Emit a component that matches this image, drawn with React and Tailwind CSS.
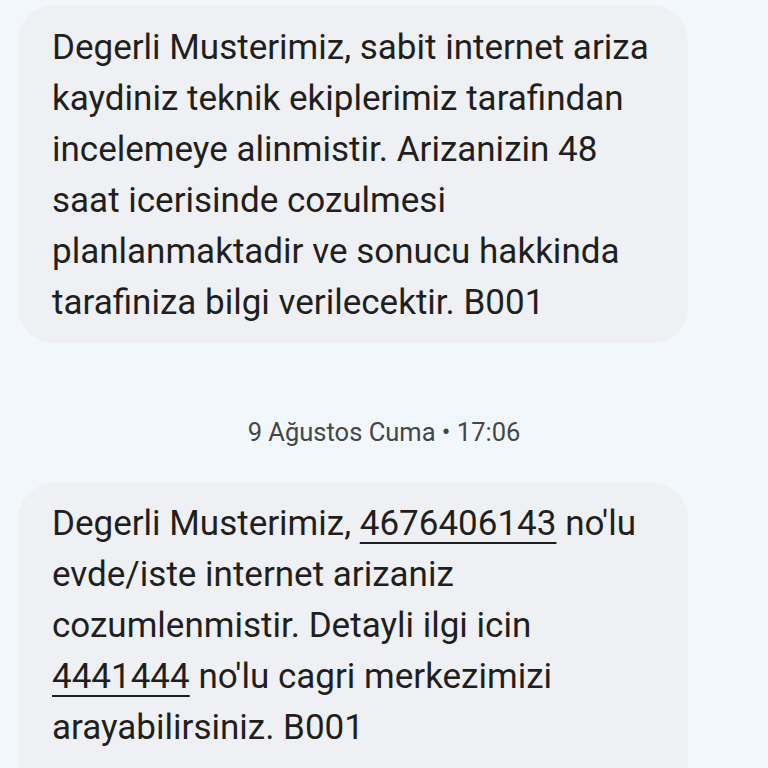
export default function App() {
  const font = { fontFamily: "Roboto, 'Noto Sans', sans-serif" };
  return (
    <div className="w-[768px] h-[768px] overflow-hidden bg-[#f2f7fc]" style={font}>
      <div className="pt-[5px] pl-[18px]">
        <div className="w-[670px] h-[338px] rounded-[36px] bg-[#eff0f3] pl-[34px] pt-[17px] text-[35px] leading-[51px] text-[#1f1f1f] whitespace-nowrap">
          <div>Degerli Musterimiz, sabit internet ariza</div>
          <div>kaydiniz teknik ekiplerimiz tarafindan</div>
          <div>incelemeye alinmistir. Arizanizin 48</div>
          <div>saat icerisinde cozulmesi</div>
          <div>planlanmaktadir ve sonucu hakkinda</div>
          <div>tarafiniza bilgi verilecektir. B001</div>
        </div>
      </div>
      <div className="h-[140px] flex items-center justify-center">
        <span className="text-[25.5px] text-[#444746] mt-[38px]">9 Ağustos Cuma • 17:06</span>
      </div>
      <div className="pl-[18px]">
        <div className="w-[670px] h-[320px] rounded-[36px] bg-[#eff0f3] pl-[34px] pt-[15px] text-[35px] leading-[51px] text-[#1f1f1f] whitespace-nowrap">
          <div>Degerli Musterimiz, <span className="underline decoration-2 underline-offset-[7px]">4676406143</span> no'lu</div>
          <div>evde/iste internet arizaniz</div>
          <div>cozumlenmistir. Detayli ilgi icin</div>
          <div><span className="underline decoration-2 underline-offset-[7px]">4441444</span> no'lu cagri merkezimizi</div>
          <div>arayabilirsiniz. B001</div>
        </div>
      </div>
    </div>
  );
}
